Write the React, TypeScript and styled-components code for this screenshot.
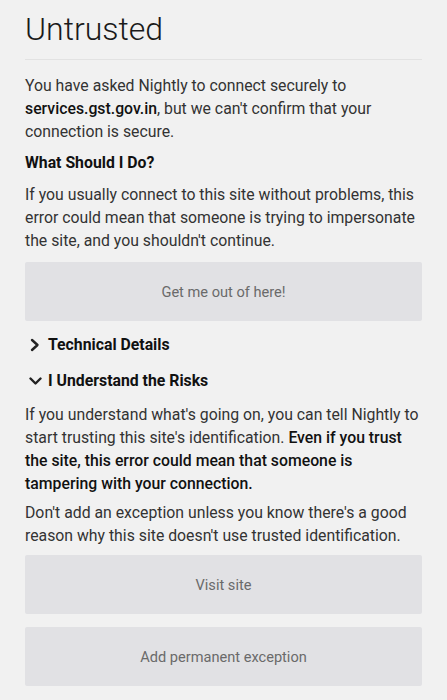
import styled, { createGlobalStyle } from 'styled-components'

const GlobalStyle = createGlobalStyle`
  html, body {
    margin: 0;
    padding: 0;
    background: #f1f1f1;
  }
  body {
    font-family: Roboto, "Noto Sans", sans-serif;
    color: #222222;
  }
`

const Page = styled.div`
  padding: 10px 25px 14px 25px;
  display: flex;
  flex-direction: column;
`

const Title = styled.h1`
  margin: 0;
  font-size: 32px;
  font-weight: 300;
  line-height: 38px;
  color: #1a1a1a;
  padding-bottom: 11px;
  border-bottom: 1px solid #e2e2e2;
`

const Para = styled.p<{ $top?: number }>`
  margin: ${(p) => p.$top ?? 9}px 0 0 0;
  font-size: 15.8px;
  line-height: 23px;
  color: #333333;
`

const Strong = styled.strong`
  font-weight: 500;
  color: #111111;
`

const Heading = styled.h2`
  margin: 8px 0 0 0;
  font-size: 15.8px;
  font-weight: 700;
  line-height: 23px;
  color: #111111;
`

const ActionButton = styled.button<{ $top?: number }>`
  margin-top: ${(p) => p.$top ?? 10}px;
  height: 59px;
  width: 100%;
  border: none;
  border-radius: 2px;
  background: #e1e1e4;
  color: #6a6a6a;
  font-family: Roboto, "Noto Sans", sans-serif;
  font-size: 14.6px;
  font-weight: 400;
`

const Toggle = styled.div<{ $top?: number }>`
  margin-top: ${(p) => p.$top ?? 12}px;
  display: flex;
  align-items: center;
  gap: 6px;
  padding-left: 4px;
  font-size: 15.8px;
  font-weight: 700;
  line-height: 23px;
  color: #111111;
`

const Chevron = ({ open }: { open: boolean }) => (
  <svg width="13" height="14" viewBox="0 0 13 14">
    <path
      d={open ? 'M1.5 4.5 L6.5 9.5 L11.5 4.5' : 'M3 2 L8.5 7 L3 12'}
      fill="none"
      stroke="#222"
      strokeWidth="2.4"
      strokeLinecap="round"
      strokeLinejoin="round"
    />
  </svg>
)

export default function App() {
  return (
    <>
      <GlobalStyle />
      <Page>
        <Title>Untrusted</Title>
        <Para $top={14}>
          You have asked Nightly to connect securely to{' '}
          <Strong>services.gst.gov.in</Strong>, but we can't confirm that your
          connection is secure.
        </Para>
        <Heading>What Should I Do?</Heading>
        <Para>
          If you usually connect to this site without problems, this error
          could mean that someone is trying to impersonate the site, and you
          shouldn't continue.
        </Para>
        <ActionButton>Get me out of here!</ActionButton>
        <Toggle $top={12}>
          <Chevron open={false} />
          Technical Details
        </Toggle>
        <Toggle $top={13}>
          <Chevron open={true} />
          I Understand the Risks
        </Toggle>
        <Para $top={11}>
          If you understand what's going on, you can tell Nightly to start
          trusting this site's identification.{' '}
          <Strong>
            Even if you trust the site, this error could mean that someone is
            tampering with your connection.
          </Strong>
        </Para>
        <Para $top={6}>
          Don't add an exception unless you know there's a good reason why this
          site doesn't use trusted identification.
        </Para>
        <ActionButton $top={8}>Visit site</ActionButton>
        <ActionButton $top={13}>Add permanent exception</ActionButton>
      </Page>
    </>
  )
}
